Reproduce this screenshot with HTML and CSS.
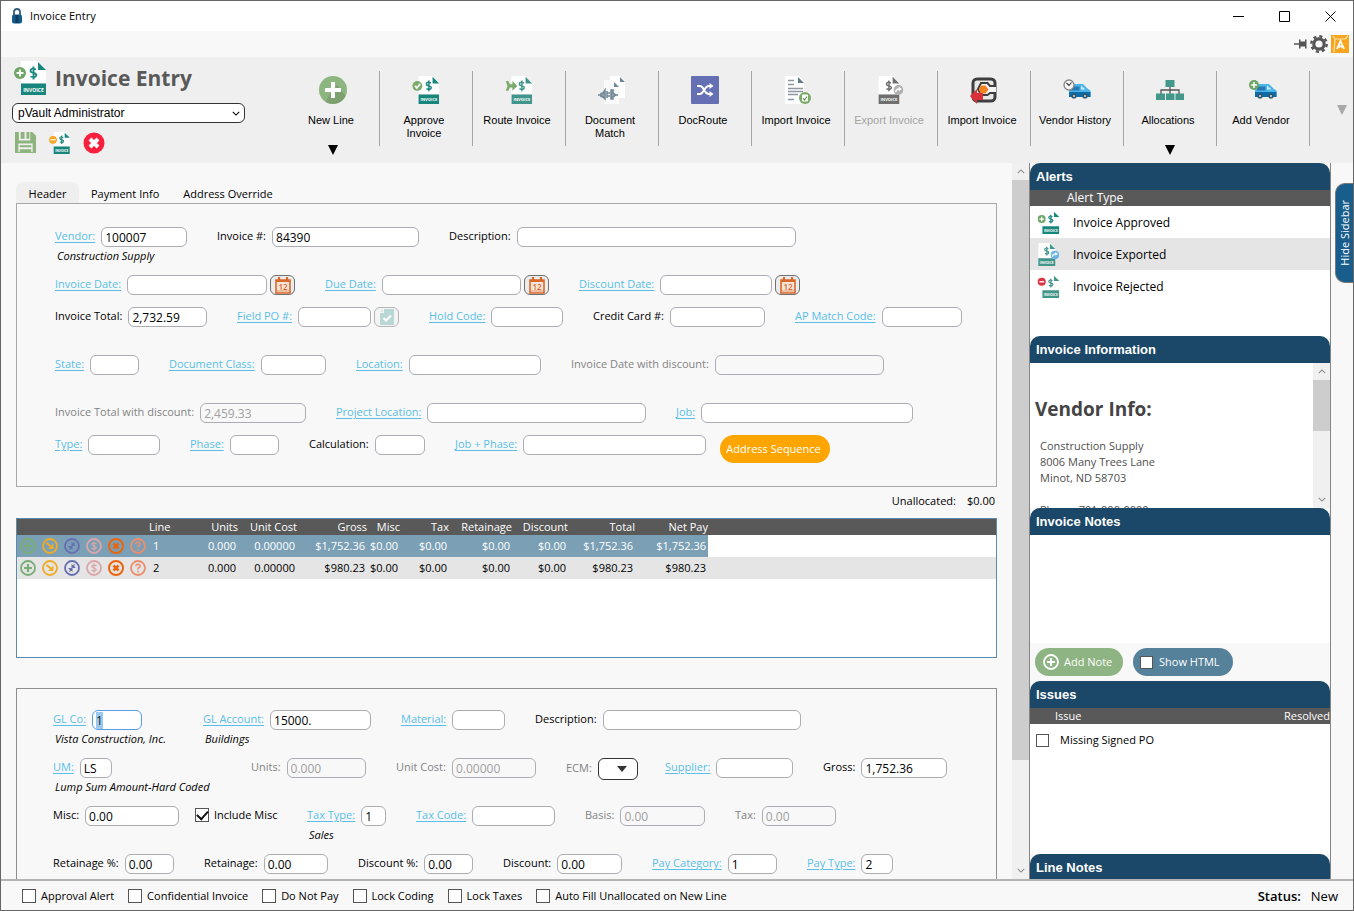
FILE: index.html
```html
<!DOCTYPE html>
<html lang="en">
<head>
<meta charset="utf-8">
<title>Invoice Entry</title>
<link rel="stylesheet" href="styles.css">
</head>
<body>
<svg class="defs" aria-hidden="true">
  <symbol id="page" viewBox="0 0 32 34">
    <path d="M7 0H24L32 8V22H7Z" fill="#fff"/><path d="M24 1L32 9H24Z" fill="currentColor"/>
    <path d="M22 8.500Q16.500 6.500 16.500 9.600Q16.500 11.500 19.500 12Q22.500 12.600 22.300 14.500Q21.500 17.300 16.500 15.500M19.500 5.500V18.500" fill="none" stroke="currentColor" stroke-width="1.800"/>
    <path d="M7 22.500H32V34H7Z" fill="currentColor"/>
    <text x="19.500" y="30.500" class="band">INVOICE</text>
  </symbol>
  <symbol id="page-left" viewBox="0 0 32 34">
    <path d="M1 0H18L26 8V22H1Z" fill="#fff"/><path d="M18 1L26 9H18Z" fill="currentColor"/>
    <path d="M16 8.500Q10.500 6.500 10.500 9.600Q10.500 11.500 13.500 12Q16.500 12.600 16.300 14.500Q15.500 17.300 10.500 15.500M13.500 5.500V18.500" fill="none" stroke="currentColor" stroke-width="1.800"/>
    <path d="M1 22.500H26V34H1Z" fill="currentColor"/>
    <text x="13.500" y="30.500" class="band">INVOICE</text>
  </symbol>
  <symbol id="badge-plus" viewBox="0 0 12 12"><circle cx="6" cy="6" r="6" fill="#6fa567"/><path d="M6 2.500V9.500M2.500 6H9.500" stroke="#fff" stroke-width="1.800"/></symbol>
  <symbol id="badge-go" viewBox="0 0 12 12"><circle cx="6" cy="6" r="6" fill="var(--badge)"/><path d="M2.500 8.500Q3 4.800 7 4.800" stroke="#fff" stroke-width="1.600" fill="none"/><path d="M6.500 2.200L10 4.800L6.500 7.400Z" fill="#fff"/></symbol>
  <symbol id="calendar" viewBox="0 0 16 17">
    <path d="M1 3H15V16H1Z" fill="#f6e3d8" stroke="#d9682b" stroke-width="1.600"/><path d="M1 3H15V5H1Z" fill="#d9682b"/>
    <path d="M4 0V4M12 0V4" stroke="#d9682b" stroke-width="2.200"/><path d="M2 14H14" stroke="#e39a70"/>
    <text x="8" y="12.500" class="cal-day">12</text>
  </symbol>
  <symbol id="van" viewBox="0 0 28 20">
    <path d="M6 5H20L25 10L27.500 11.500V18H6Z" fill="#4bb4e8"/><path d="M6 13H27.500V18H6Z" fill="#0d6ca5"/>
    <path d="M8 7.500H16.500V11.500H8Z" fill="#2579b5"/><path d="M18 6.500L22.500 10.500H18Z" fill="#cdeaf9"/>
    <circle cx="11" cy="17" r="2.600" fill="#31566d"/><circle cx="11" cy="17" r="1" fill="#ddd"/>
    <circle cx="22" cy="17" r="2.600" fill="#31566d"/><circle cx="22" cy="17" r="1" fill="#ddd"/>
  </symbol>
  <symbol id="chev-up" viewBox="0 0 10 6"><path d="M1 5L5 1L9 5" fill="none" stroke="#8a8a8a" stroke-width="1.300"/></symbol>
  <symbol id="chev-down" viewBox="0 0 10 6"><path d="M1 1L5 5L9 1" fill="none" stroke="currentColor" stroke-width="1.300"/></symbol>
  <symbol id="tri" viewBox="0 0 10 10"><path d="M0 0H10L5 10Z" fill="currentColor"/></symbol>
  <symbol id="a-add" viewBox="0 0 16 16"><circle cx="8" cy="8" r="7" fill="none" stroke="currentColor" stroke-width="1.800"/><path d="M8 4V12M4 8H12" stroke="currentColor" stroke-width="2.200"/></symbol>
  <symbol id="a-copy" viewBox="0 0 16 16"><circle cx="8" cy="8" r="7" fill="none" stroke="currentColor" stroke-width="1.800"/><path d="M4.500 5L9 8.500" stroke="currentColor" stroke-width="2.200"/><path d="M11.500 5.500V11H6Z" fill="currentColor"/></symbol>
  <symbol id="a-cycle" viewBox="0 0 16 16"><circle cx="8" cy="8" r="7" fill="none" stroke="currentColor" stroke-width="1.800"/><path d="M4 8H8.500V12L7 10.800Q6 12 5 12Q6 10.500 5.500 9.500ZM12 8H7.500V4L9 5.200Q10 4 11 4Q10 5.500 10.500 6.500Z" fill="currentColor"/></symbol>
  <symbol id="a-cost" viewBox="0 0 16 16"><circle cx="8" cy="8" r="7" fill="none" stroke="currentColor" stroke-width="1.800"/><path d="M10.500 6Q8 4 6 5.800Q5.500 7.500 8 8Q10.800 8.800 10 10.300Q8 12 5.500 10M8 3.500V12.500" fill="none" stroke="currentColor" stroke-width="1.200"/></symbol>
  <symbol id="a-del" viewBox="0 0 16 16"><circle cx="8" cy="8" r="7" fill="none" stroke="currentColor" stroke-width="2"/><path d="M5.500 5.500L10.500 10.500M10.500 5.500L5.500 10.500" stroke="currentColor" stroke-width="2.600"/></symbol>
  <symbol id="a-help" viewBox="0 0 16 16"><circle cx="8" cy="8" r="7" fill="none" stroke="currentColor" stroke-width="1.800"/><path d="M5.800 6.300Q6 4.200 8 4.200Q10.300 4.300 10.200 6.200Q10 7.500 8 8.300V9.500M8 10.800V12.500" fill="none" stroke="currentColor" stroke-width="1.500"/></symbol>
</svg>

<div class="window">
  <header class="titlebar">
    <svg width="12" height="16" viewBox="0 0 12 16"><path d="M3 8V4Q3 1 6 1Q9 1 9 4V8" fill="none" stroke="#34607f" stroke-width="1.800"/><rect x="1" y="6.500" width="10" height="9" rx="2" fill="#155a8a"/><path d="M6 7V15" stroke="#0b3c63" stroke-width="3"/></svg>
    <span class="caption">Invoice Entry</span>
    <button class="win" aria-label="Minimize"><svg width="11" height="11"><path d="M0 5.500H11" stroke="#000"/></svg></button>
    <button class="win" aria-label="Maximize"><svg width="11" height="11"><path d="M.5 .5H10.500V10.500H.5Z" fill="none" stroke="#000"/></svg></button>
    <button class="win" aria-label="Close"><svg width="11" height="11"><path d="M.5 .5L10.500 10.500M10.500 .5L.5 10.500" stroke="#000"/></svg></button>
  </header>
  <div class="strip">
    <button aria-label="Pin"><svg width="13" height="12" viewBox="0 0 13 12"><path d="M0 6H5" stroke="#555" stroke-width="1.500"/><path d="M5 1.500H6.500V3.500H11V1.500H12.500V10.500H11V8.500H6.500V10.500H5Z" fill="#555"/></svg></button>
    <button aria-label="Settings"><svg width="18" height="18" viewBox="0 0 18 18"><circle cx="9" cy="9" r="5.200" fill="none" stroke="#555" stroke-width="3.200"/><circle cx="9" cy="9" r="7.700" fill="none" stroke="#555" stroke-width="2.400" stroke-dasharray="3.100 2.950"/></svg></button>
    <button aria-label="Application"><svg width="18" height="18" viewBox="0 0 18 18"><rect width="18" height="18" fill="#f6a51c"/><path d="M2 1L4 4H14L17 1M4 4L3 17" fill="none" stroke="#fde3b0" stroke-width="1.200"/><path d="M6 14L9.500 6L13 14M7.300 11.500H11.800" fill="none" stroke="#fff" stroke-width="1.800"/></svg></button>
  </div>

  <div class="ribbon">
    <div class="brand">
      <div class="brand-top">
        <span class="icon-lg teal"><svg width="32" height="34" viewBox="0 0 32 34"><use href="#page"/><use href="#badge-plus" x="0" y="6" width="12" height="12"/></svg></span>
        <h1>Invoice Entry</h1>
      </div>
      <div class="pick user-pick">
        <select aria-label="User"><option>pVault Administrator</option></select>
        <svg width="8" height="5"><use href="#chev-down"/></svg>
      </div>
      <div class="quick">
        <button aria-label="Save"><svg width="21" height="21" viewBox="0 0 22 22"><path d="M0 0H4V9H16V0H18L22 4V22H0Z" fill="#8cb47c"/><path d="M6 0H10V7H6ZM12 0H15V7H12Z" fill="#8cb47c"/><path d="M3.500 12H18.500V21H3.500Z" fill="#efefef"/><path d="M5 14H17V16H5ZM5 18H17V21H5Z" fill="#8cb47c"/></svg></button>
        <button aria-label="Hold invoice" class="teal"><svg width="21" height="22" viewBox="0 0 32 34"><use href="#page"/><ellipse cx="6" cy="12" rx="6" ry="6" fill="#f5a623"/><path d="M2 12H10" stroke="#fff" stroke-width="1.800"/></svg></button>
        <button aria-label="Cancel"><svg width="22" height="22" viewBox="0 0 22 22"><circle cx="11" cy="11" r="10.500" fill="#f8203c"/><path d="M7 7L15 15M15 7L7 15" stroke="#fff" stroke-width="4"/></svg></button>
      </div>
    </div>
    <nav class="tools">
      <button class="tool"><svg width="28" height="28" viewBox="0 0 28 28"><circle cx="14" cy="14" r="14" fill="#8db580"/><path d="M18 9L26.500 20A14 14 0 0 1 7 26L10 19Z" fill="#7ca06e"/><path d="M14 6V22M6 14H22" stroke="#fff" stroke-width="4"/></svg><span>New Line</span><svg class="more" width="10" height="10"><use href="#tri"/></svg></button>
      <button class="tool teal"><svg width="28" height="28" viewBox="0 0 32 34"><use href="#page"/><circle cx="5.500" cy="12" r="6" fill="#7bab6b"/><path d="M2.500 12L5 14.500L9 9.500" fill="none" stroke="#fff" stroke-width="2"/></svg><span>Approve<br>Invoice</span></button>
      <button class="tool teal2"><svg width="28" height="28" viewBox="0 0 32 34"><use href="#page"/><path d="M0 6H3L5 10H8V6L14 12L8 18V14H5L3 18H0L2 12Z" fill="#7bab6b"/></svg><span>Route Invoice</span></button>
      <button class="tool"><svg width="28" height="28" viewBox="0 0 28 28"><path d="M6 4H15L21 10V28H6Z" fill="#fafafa"/><path d="M12 0H22L27 5V22H21V10L15 4H12Z" fill="#fff"/><path d="M22 1L27 6H22ZM16 6L21 11H16Z" fill="#6f8795"/><path d="M0 19H3M3 17.500L5 17L7 14V23L5 21L3 20.500ZM9 15V22M9 17H12M9 20H12M18 19L15 17V14H13V23H15V21ZM17 19H20" stroke="#6f8795" stroke-width="1.500" fill="#8ea1ad"/></svg><span>Document<br>Match</span></button>
      <button class="tool"><svg width="28" height="28" viewBox="0 0 28 28"><rect width="28" height="28" rx="1" fill="#6570b4"/><path d="M6 10H9C13 10 13 18 18 18H20M6 18H9C13 18 13 10 18 10H20" fill="none" stroke="#fff" stroke-width="2"/><path d="M18.500 7L22.500 10L18.500 13ZM18.500 15L22.500 18L18.500 21Z" fill="#fff"/></svg><span>DocRoute</span></button>
      <button class="tool"><svg width="28" height="28" viewBox="0 0 28 28"><path d="M1 0H15L20 6V28H1Z" fill="#fff"/><path d="M14 1L20 7H14Z" fill="#607d86"/><path d="M4 4.500H10M4 8.500H10M4 12.500H19M4 15.500H19M4 18.500H14M4 23.500H10" stroke="#8d99a0" stroke-width="1.300"/><circle cx="21" cy="22" r="6" fill="#7bab6b"/><rect x="18" y="18.500" width="6" height="7" rx="1" fill="#fff"/><path d="M19 22L20.500 24L23 20.500" fill="none" stroke="#5e9450" stroke-width="1.200"/></svg><span>Import Invoice</span></button>
      <button class="tool grey" disabled><svg width="28" height="28" viewBox="0 0 32 34"><use href="#page-left"/><use href="#badge-go" x="19" y="11" width="12" height="12"/></svg><span>Export Invoice</span></button>
      <button class="tool"><svg width="28" height="28" viewBox="0 0 28 28"><rect x="3" y="3" width="22" height="22" rx="4" fill="#e8e8e8" stroke="#3f3f3f" stroke-width="3"/><path d="M26 10H20L17.500 7H11L8 13L11 19H17.500L20 17H26" fill="#f4f4f4" stroke="#3f3f3f" stroke-width="2"/><path d="M10.500 9.500H15.500L18.500 13.500L15.500 17.500H10.500L9 13.500Z" fill="#f58220"/><path d="M0 20L7 13V17H13V24H7V28Z" fill="#d9303a"/></svg><span>Import Invoice</span></button>
      <button class="tool"><svg width="28" height="28" viewBox="0 0 28 28"><use href="#van" x="0" y="3" width="28" height="20"/><circle cx="6" cy="9" r="5" fill="#f5f5f5" stroke="#888" stroke-width="1.300"/><path d="M3.500 7L6 9.500L8.500 6.500" fill="none" stroke="#333" stroke-width="1.100"/></svg><span>Vendor History</span></button>
      <button class="tool"><svg width="28" height="28" viewBox="0 0 28 28"><path d="M14 10V14M5 18V14H23V18M14 14V18" fill="none" stroke="#555" stroke-width="1.300"/><path d="M9.500 4H18.500V11H9.500ZM0 17.500H9V24H0ZM10 17.500H18.500V24H10ZM19.500 17.500H28V24H19.500Z" fill="#43978b"/></svg><span>Allocations</span><svg class="more" width="10" height="10"><use href="#tri"/></svg></button>
      <button class="tool"><svg width="28" height="28" viewBox="0 0 28 28"><use href="#van" x="0" y="3" width="28" height="20"/><use href="#badge-plus" x="0" y="4" width="10" height="10"/></svg><span>Add Vendor</span></button>
    </nav>
    <button class="overflow" aria-label="More tools"><svg width="10" height="10"><use href="#tri"/></svg></button>
  </div>

  <div class="body">
    <main class="work">
      <nav class="tabs">
        <button class="tab on">Header</button><button class="tab">Payment Info</button><button class="tab">Address Override</button>
      </nav>
      <section class="panel header-panel">
        <div class="row r1">
          <div class="field"><label for="vendor"><a href="#">Vendor:</a></label><input id="vendor" value="100007"><p class="note">Construction Supply</p></div>
          <div class="field"><label for="invno">Invoice #:</label><input id="invno" value="84390"></div>
          <div class="field"><label for="desc">Description:</label><input id="desc"></div>
        </div>
        <div class="row short r2">
          <div class="field"><label for="idate"><a href="#">Invoice Date:</a></label><input id="idate"><button class="cal" aria-label="Pick invoice date"><svg width="16" height="17"><use href="#calendar"/></svg></button></div>
          <div class="field"><label for="ddate"><a href="#">Due Date:</a></label><input id="ddate"><button class="cal" aria-label="Pick due date"><svg width="16" height="17"><use href="#calendar"/></svg></button></div>
          <div class="field"><label for="disc"><a href="#">Discount Date:</a></label><input id="disc"><button class="cal" aria-label="Pick discount date"><svg width="16" height="17"><use href="#calendar"/></svg></button></div>
        </div>
        <div class="row r3">
          <div class="field"><label for="total">Invoice Total:</label><input id="total" value="2,732.59"></div>
          <div class="field"><label for="po"><a href="#">Field PO #:</a></label><input id="po"><button class="cal off" aria-label="Open PO" disabled><svg width="14" height="16" viewBox="0 0 14 16"><path d="M4 0H14V16H0V4H4Z" fill="#b9d8d5"/><path d="M0 3L3 0V3Z" fill="#d8e8e6"/><path d="M3.500 9L6 11.500L11 6.500" fill="none" stroke="#fff" stroke-width="2"/></svg></button></div>
          <div class="field"><label for="hold"><a href="#">Hold Code:</a></label><input id="hold"></div>
          <div class="field"><label for="cc">Credit Card #:</label><input id="cc"></div>
          <div class="field"><label for="ap"><a href="#">AP Match Code:</a></label><input id="ap"></div>
        </div>
        <div class="row r4">
          <div class="field"><label for="state"><a href="#">State:</a></label><input id="state"></div>
          <div class="field"><label for="dclass"><a href="#">Document Class:</a></label><input id="dclass"></div>
          <div class="field"><label for="loc"><a href="#">Location:</a></label><input id="loc"></div>
          <div class="field dim"><label for="idd">Invoice Date with discount:</label><input id="idd" disabled></div>
        </div>
        <div class="row short r5">
          <div class="field dim"><label for="itd">Invoice Total with discount:</label><input id="itd" value="2,459.33" disabled></div>
          <div class="field"><label for="ploc"><a href="#">Project Location:</a></label><input id="ploc"></div>
          <div class="field"><label for="job"><a href="#">Job:</a></label><input id="job"></div>
        </div>
        <div class="row r6">
          <div class="field"><label for="type"><a href="#">Type:</a></label><input id="type"></div>
          <div class="field"><label for="phase"><a href="#">Phase:</a></label><input id="phase"></div>
          <div class="field"><label for="calc">Calculation:</label><input id="calc"></div>
          <div class="field"><label for="jp"><a href="#">Job + Phase:</a></label><input id="jp"></div>
          <button class="sequence">Address Sequence</button>
        </div>
      </section>

      <p class="unallocated"><span>Unallocated:</span><span>$0.00</span></p>

      <section class="lines">
        <table>
          <colgroup><col class="c-act"><col class="c-line"><col class="c-units"><col class="c-cost"><col class="c-gross"><col class="c-misc"><col class="c-tax"><col class="c-ret"><col class="c-disc"><col class="c-total"><col class="c-net"><col></colgroup>
          <thead><tr><th></th><th class="left">Line</th><th>Units</th><th>Unit Cost</th><th>Gross</th><th>Misc</th><th>Tax</th><th>Retainage</th><th>Discount</th><th>Total</th><th>Net Pay</th><th></th></tr></thead>
          <tbody>
            <tr class="picked"><td><div class="acts">
              <button class="green" aria-label="Add"><svg width="16" height="16"><use href="#a-add"/></svg></button><button class="amber" aria-label="Copy"><svg width="16" height="16"><use href="#a-copy"/></svg></button><button class="indigo" aria-label="Recalculate"><svg width="16" height="16"><use href="#a-cycle"/></svg></button><button class="pink" aria-label="Cost"><svg width="16" height="16"><use href="#a-cost"/></svg></button><button class="orange" aria-label="Delete"><svg width="16" height="16"><use href="#a-del"/></svg></button><button class="salmon" aria-label="Help"><svg width="16" height="16"><use href="#a-help"/></svg></button></div></td>
              <td class="left">1</td><td>0.000</td><td>0.00000</td><td>$1,752.36</td><td>$0.00</td><td>$0.00</td><td>$0.00</td><td>$0.00</td><td>$1,752.36</td><td>$1,752.36</td><td class="rest"></td></tr>
            <tr class="alt"><td><div class="acts">
              <button class="green" aria-label="Add"><svg width="16" height="16"><use href="#a-add"/></svg></button><button class="amber" aria-label="Copy"><svg width="16" height="16"><use href="#a-copy"/></svg></button><button class="indigo" aria-label="Recalculate"><svg width="16" height="16"><use href="#a-cycle"/></svg></button><button class="pink" aria-label="Cost"><svg width="16" height="16"><use href="#a-cost"/></svg></button><button class="orange" aria-label="Delete"><svg width="16" height="16"><use href="#a-del"/></svg></button><button class="salmon" aria-label="Help"><svg width="16" height="16"><use href="#a-help"/></svg></button></div></td>
              <td class="left">2</td><td>0.000</td><td>0.00000</td><td>$980.23</td><td>$0.00</td><td>$0.00</td><td>$0.00</td><td>$0.00</td><td>$980.23</td><td>$980.23</td><td></td></tr>
          </tbody>
        </table>
      </section>

      <section class="panel detail-panel">
        <div class="row d1">
          <div class="field"><label for="glco"><a href="#">GL Co:</a></label><input id="glco" class="current" value="1"><p class="note">Vista Construction, Inc.</p></div>
          <div class="field"><label for="glacct"><a href="#">GL Account:</a></label><input id="glacct" value="15000."><p class="note">Buildings</p></div>
          <div class="field"><label for="mat"><a href="#">Material:</a></label><input id="mat"></div>
          <div class="field"><label for="ldesc">Description:</label><input id="ldesc"></div>
        </div>
        <div class="row d2">
          <div class="field"><label for="um"><a href="#">UM:</a></label><input id="um" value="LS"><p class="note">Lump Sum Amount-Hard Coded</p></div>
          <div class="field dim"><label for="units">Units:</label><input id="units" value="0.000" disabled></div>
          <div class="field dim"><label for="ucost">Unit Cost:</label><input id="ucost" value="0.00000" disabled></div>
          <div class="field dim"><label for="ecm">ECM:</label><div class="pick ecm-pick"><select id="ecm"><option></option></select><svg width="10" height="6" viewBox="0 0 10 6"><path d="M0 0H10L5 6Z" fill="#333"/></svg></div></div>
          <div class="field"><label for="supp"><a href="#">Supplier:</a></label><input id="supp"></div>
          <div class="field"><label for="gross">Gross:</label><input id="gross" value="1,752.36"></div>
        </div>
        <div class="row d3">
          <div class="field"><label for="misc">Misc:</label><input id="misc" value="0.00"></div>
          <label class="check"><input type="checkbox" checked>Include Misc</label>
          <div class="field"><label for="ttype"><a href="#">Tax Type:</a></label><input id="ttype" value="1"><p class="note">Sales</p></div>
          <div class="field"><label for="tcode"><a href="#">Tax Code:</a></label><input id="tcode"></div>
          <div class="field dim"><label for="basis">Basis:</label><input id="basis" value="0.00" disabled></div>
          <div class="field dim"><label for="tax">Tax:</label><input id="tax" value="0.00" disabled></div>
        </div>
        <div class="row d4">
          <div class="field"><label for="retp">Retainage %:</label><input id="retp" value="0.00"></div>
          <div class="field"><label for="ret">Retainage:</label><input id="ret" value="0.00"></div>
          <div class="field"><label for="dp">Discount %:</label><input id="dp" value="0.00"></div>
          <div class="field"><label for="dd">Discount:</label><input id="dd" value="0.00"></div>
          <div class="field"><label for="pc"><a href="#">Pay Category:</a></label><input id="pc" value="1"><p class="note">Co Pay Type 1</p></div>
          <div class="field"><label for="pt"><a href="#">Pay Type:</a></label><input id="pt" value="2"><p class="note">Current Payable</p></div>
        </div>
      </section>
    </main>

    <div class="scroll main-scroll"><svg width="8" height="5"><use href="#chev-up"/></svg><div class="track"><div class="thumb"></div></div><svg width="8" height="5"><use href="#chev-down"/></svg></div>

    <aside class="side">
      <h2>Alerts</h2>
      <div class="alerts">
        <table>
          <thead><tr><th></th><th>Alert Type</th></tr></thead>
          <tbody>
            <tr><td class="teal"><svg width="23" height="23" viewBox="0 0 32 34"><use href="#page"/><use href="#badge-plus" x="0" y="6" width="12" height="12"/></svg></td><td>Invoice Approved</td></tr>
            <tr class="alt"><td class="teal2 blue-badge"><svg width="23" height="23" viewBox="0 0 32 34"><use href="#page-left"/><use href="#badge-go" x="19" y="11" width="13" height="13"/></svg></td><td>Invoice Exported</td></tr>
            <tr><td class="teal2"><svg width="23" height="23" viewBox="0 0 32 34"><use href="#page"/><circle cx="6" cy="10" r="6" fill="#d93545"/><path d="M2.500 10H9.500" stroke="#fff" stroke-width="2"/></svg></td><td>Invoice Rejected</td></tr>
          </tbody>
        </table>
      </div>
      <h2>Invoice Information</h2>
      <div class="info">
        <div class="info-text">
          <h3>Vendor Info:</h3>
          <p>Construction Supply<br>8006 Many Trees Lane<br>Minot, ND 58703</p>
          <p>Phone: 701-000-0000</p>
        </div>
        <div class="scroll info-scroll"><svg width="8" height="5"><use href="#chev-up"/></svg><div class="track"><div class="thumb"></div></div><svg width="8" height="5"><use href="#chev-down"/></svg></div>
      </div>
      <h2>Invoice Notes</h2>
      <div class="notes"></div>
      <div class="note-actions">
        <button class="pill add"><svg width="16" height="16"><use href="#a-add"/></svg>Add Note</button>
        <label class="pill html"><input type="checkbox">Show HTML</label>
      </div>
      <h2>Issues</h2>
      <div class="issues">
        <div class="issues-head"><span>Issue</span><span>Resolved</span></div>
        <label class="issue"><input type="checkbox">Missing Signed PO</label>
      </div>
      <h2>Line Notes</h2>
    </aside>
    <div class="edge"><button class="hide">Hide Sidebar</button></div>
  </div>

  <footer class="status">
    <label class="check"><input type="checkbox">Approval Alert</label>
    <label class="check"><input type="checkbox">Confidential Invoice</label>
    <label class="check"><input type="checkbox">Do Not Pay</label>
    <label class="check"><input type="checkbox">Lock Coding</label>
    <label class="check"><input type="checkbox">Lock Taxes</label>
    <label class="check"><input type="checkbox">Auto Fill Unallocated on New Line</label>
    <p class="state"><b>Status:</b><span>New</span></p>
  </footer>
</div>
<script src="script.js"></script>
</body>
</html>
```

FILE: styles.css
```css
* { box-sizing: border-box; }
body { margin: 0; font: 12px/16px "Open Sans", "Noto Sans", sans-serif; color: #000; }
button, input, select { font: inherit; color: inherit; }
button { border: 0; padding: 0; background: none; }
h1, h2, h3, p { margin: 0; }
.defs { display: none; }
.band { font: 700 5px "Open Sans", sans-serif; fill: #fff; text-anchor: middle; }
.cal-day { font: 600 8px "Open Sans", sans-serif; fill: #d9682b; text-anchor: middle; }
.teal { color: #17877e; }
.teal2 { color: #41958b; }

.window { height: 100vh; display: flex; flex-direction: column; border: 1px solid #666; background: #f8f8f8; overflow: hidden; }
.titlebar { display: flex; align-items: center; height: 30px; padding-left: 10px; background: #fff; flex: none; }
.caption { flex: 1; padding-left: 7px; font-size: 11px; }
.win { width: 46px; height: 28px; display: grid; place-items: center; }
.strip { display: flex; justify-content: flex-end; align-items: center; gap: 3px; height: 26px; padding-right: 4px; flex: none; }
.strip button { display: grid; }

.ribbon { display: flex; height: 106px; background: #efefef; flex: none; }
.brand { width: 286px; padding: 2px 0 0 11px; flex: none; }
.brand-top { display: flex; align-items: center; height: 38px; padding-left: 2px; gap: 9px; }
.icon-lg { display: grid; }
h1 { font-size: 21px; line-height: 30px; font-weight: 700; color: #595959; }
.pick { display: flex; align-items: center; border: 1px solid #333; border-radius: 6px; background: #fff; }
.pick select { flex: 1; min-width: 0; appearance: none; border: 0; background: none; padding: 0 5px; height: 100%; outline: 0; }
.pick svg { margin-left: -14px; margin-right: 6px; pointer-events: none; flex: none; }
.user-pick { width: 233px; height: 20px; margin-top: 6px; font: 12px "Liberation Sans", sans-serif; }
.user-pick svg { margin-right: 4px; }
.quick { display: flex; gap: 13px; padding: 9px 0 0 3px; }
.quick button { display: grid; }
.tools { display: flex; padding-top: 14px; height: 89px; }
.tool { position: relative; width: 93px; border-right: 1px solid #a5a5a5; display: flex; flex-direction: column; align-items: center; gap: 10px; padding-top: 5px; }
.tool span { font: 11px/13px "Liberation Sans", sans-serif; color: #000; padding-right: 4px; }
.tool.grey { color: #6f6f6f; --badge: #b0b0b0; }
.tool.grey span { color: #a3a3a3; }
.more { position: absolute; left: 41px; top: 74px; color: #000; }
.overflow { display: grid; place-items: center; flex: 1; padding-left: 20px; color: #a8a8a8; }

.body { flex: 1; min-height: 0; display: flex; border-bottom: 2px solid #b4b4b4; }
.work { flex: 1; min-width: 0; padding: 19px 15px 0; overflow: hidden; }
.tabs { display: flex; height: 21px; }
.tab { padding: 2px 12px 0; font-size: 11px; }
.tab.on { background: #efefef; border-radius: 7px 7px 0 0; width: 63px; }
.panel { border: 1px solid #a8a8a8; font-size: 11px; }
.header-panel { height: 284px; padding: 23px 38px 0; }
.detail-panel { margin-top: 30px; height: 260px; padding: 21px 36px 0; border-color: #8f8f8f; }
.row { display: grid; column-gap: 30px; height: 48px; align-items: start; }
.row.short { height: 32px; }
.r1 { grid-template-columns: 132px 202px 347px; }
.r2 { grid-template-columns: 240px 224px 221px; }
.r3 { grid-template-columns: 152px 162px 134px 172px 167px; }
.r4 { grid-template-columns: 84px 157px 185px 313px; }
.r5 { grid-template-columns: 251px 310px 237px; }
.r6 { grid-template-columns: 105px 89px 116px 251px 110px; }
.d1 { grid-template-columns: 120px 168px 104px 266px; }
.d2 { grid-template-columns: 168px 115px 140px 69px 128px 124px; }
.d3 { grid-template-columns: 126px 68px 79px 139px 120px 101px; }
.d4 { grid-template-columns: 121px 124px 115px 119px 125px 86px; }
.d1 .field:first-child { padding-right: 31px; }
.d2 .field:first-child { padding-right: 109px; }
.d3 .check { margin-left: -14px; height: 18px; }
.field { display: grid; grid-template-columns: auto minmax(0, 1fr) auto; align-items: center; white-space: nowrap; }
.field > label { padding-right: 6px; line-height: 18px; padding-bottom: 2px; }
.field a { color: #59bfe8; text-decoration: underline; text-underline-offset: 2px; }
.field > input { width: 100%; height: 20px; border: 1px solid #abadb3; border-radius: 6px; background: #fff; padding: 0 3px; outline: 0; font-size: 12px; }
.field > input.current { border-color: #569de5; }
.field > input::selection { background: #99c9ef; color: #222; }
.dim { color: #838383; }
.field > input:disabled { background: #f8f8f8; color: #a0a0a0; }
.note { grid-column: 1 / -1; width: 0; padding-left: 2px; line-height: 18px; font-style: italic; color: #000; }
.cal { width: 25px; height: 20px; margin-left: 3px; border: 1px solid #707070; border-radius: 6px; background: #ededed; display: grid; place-items: center; }
.cal.off { border-color: #b5b5b5; background: #f4f4f4; }
.sequence { height: 28px; margin-left: -16px; width: 110px; border-radius: 14px; background: #ffa500; color: #fff; white-space: nowrap; padding-right: 3px; }
.ecm-pick { width: 40px; height: 22px; justify-self: end; margin-right: -3px; }
.ecm-pick svg { margin-right: 10px; margin-left: -20px; }

.check { display: flex; align-items: center; gap: 5px; white-space: nowrap; }
input[type="checkbox"] { appearance: none; flex: none; margin: 0; width: 14px; height: 14px; border: 1px solid #555; background: #fff; display: grid; place-items: center; }
input[type="checkbox"]:checked::after { content: ""; width: 5px; height: 9px; border: solid #111; border-width: 0 2px 2px 0; transform: rotate(42deg) translate(-1px, -1px); }

.unallocated { display: flex; justify-content: flex-end; gap: 11px; padding: 6px 2px 9px; font-size: 11px; }
.lines { height: 140px; border: 1px solid #5b8cad; background: #fff; }
.lines table { width: 100%; table-layout: fixed; border-collapse: collapse; font-size: 11px; }
.c-act { width: 130px; } .c-line { width: 40px; } .c-units { width: 51px; } .c-cost { width: 59px; } .c-gross { width: 70px; } .c-misc { width: 33px; } .c-tax { width: 49px; } .c-ret { width: 63px; } .c-disc { width: 56px; } .c-total { width: 67px; } .c-net { width: 73px; }
.lines th { height: 16px; padding: 0; background: #595959; color: #fff; font-weight: 400; text-align: right; white-space: nowrap; }
.lines td { height: 22px; padding: 0 2px 0 0; text-align: right; white-space: nowrap; }
.lines th.left { text-align: left; padding-left: 2px; }
.lines td.left { text-align: left; padding-left: 6px; }
.picked { background: #7ba0b5; color: #fff; }
.picked .rest { background: #fff; }
.alt { background: #e5e5e5; }
.acts { display: flex; gap: 6px; padding-left: 3px; }
.acts button { display: grid; }
.green { color: #78ae74; } .amber { color: #f0ab27; } .indigo { color: #666fb1; } .pink { color: #dba5a9; } .orange { color: #ea650d; } .salmon { color: #ea8e6e; }

.scroll { width: 17px; display: flex; flex-direction: column; align-items: center; background: #f0f0f0; padding: 6px 0; flex: none; color: #8a8a8a; gap: 6px; }
.track { flex: 1; width: 100%; display: flex; flex-direction: column; }
.thumb { background: #cdcdcd; }
.main-scroll .thumb { height: 85%; }
.info-scroll .thumb { height: 46%; }

.side { width: 302px; border: solid #858585; border-width: 0 1px; background: #f8f8f8; display: flex; flex-direction: column; flex: none; overflow: hidden; font-size: 12px; }
.side h2 { height: 27px; flex: none; padding-left: 6px; border-radius: 10px 10px 0 0; background: #1b4868; color: #fff; font: 700 13px/27px "Liberation Sans", sans-serif; }
.alerts { height: 146px; flex: none; background: #fff; }
.alerts table { width: 100%; border-collapse: collapse; }
.alerts th { height: 16px; padding: 0; background: #595959; color: #fff; font-weight: 400; text-align: left; }
.alerts td { height: 32px; padding: 2px 0 0 6px; }
.alerts td:first-child { width: 37px; padding: 0 0 0 7px; }
.alerts svg { display: block; }
.blue-badge { --badge: #6cb5e8; }
.info { height: 145px; flex: none; display: flex; background: #fff; overflow: hidden; }
.info-text { flex: 1; padding-left: 5px; color: #505050; overflow: hidden; }
.info h3 { font-size: 19px; line-height: 26px; padding: 33px 0 16px; color: #444; }
.info p { padding-left: 5px; margin-bottom: 16px; font-size: 11px; }
.notes { height: 108px; flex: none; background: #fff; }
.note-actions { display: flex; gap: 10px; height: 38px; flex: none; padding: 5px; }
.pill { display: flex; align-items: center; height: 28px; border-radius: 14px; color: #fff; white-space: nowrap; padding: 0 8px; font-size: 11px; }
.add { background: #8db482; gap: 5px; width: 88px; }
.html { background: #55819a; gap: 6px; width: 100px; padding-left: 7px; }
.html input, .issue input { width: 13px; height: 13px; }
.issues { flex: 1; min-height: 0; background: #fff; }
.issues-head { display: flex; justify-content: space-between; padding-left: 25px; background: #595959; color: #fff; font-size: 11px; }
.issue { display: flex; align-items: center; gap: 11px; padding: 8px 0 0 6px; font-size: 11px; }
.side h2:last-child { height: 25px; }

.edge { width: 22px; flex: none; padding-top: 20px; }
.hide { display: flex; align-items: center; justify-content: center; margin-left: 4px; width: 18px; height: 100px; border: 1px solid #777; border-right: 0; border-radius: 10px 0 0 10px; background: #195d8c; color: #fff; font-size: 11px; writing-mode: sideways-lr; }

.status { display: flex; align-items: center; height: 29px; padding: 0 15px 0 21px; gap: 14px; flex: none; font-size: 11px; }
.state { margin-left: auto; display: flex; gap: 10px; font-size: 13px; }
.state b { font-weight: 600; }
```

FILE: script.js
```js
const current = document.getElementById("glco");
current.focus({ preventScroll: true });
current.select();
```
